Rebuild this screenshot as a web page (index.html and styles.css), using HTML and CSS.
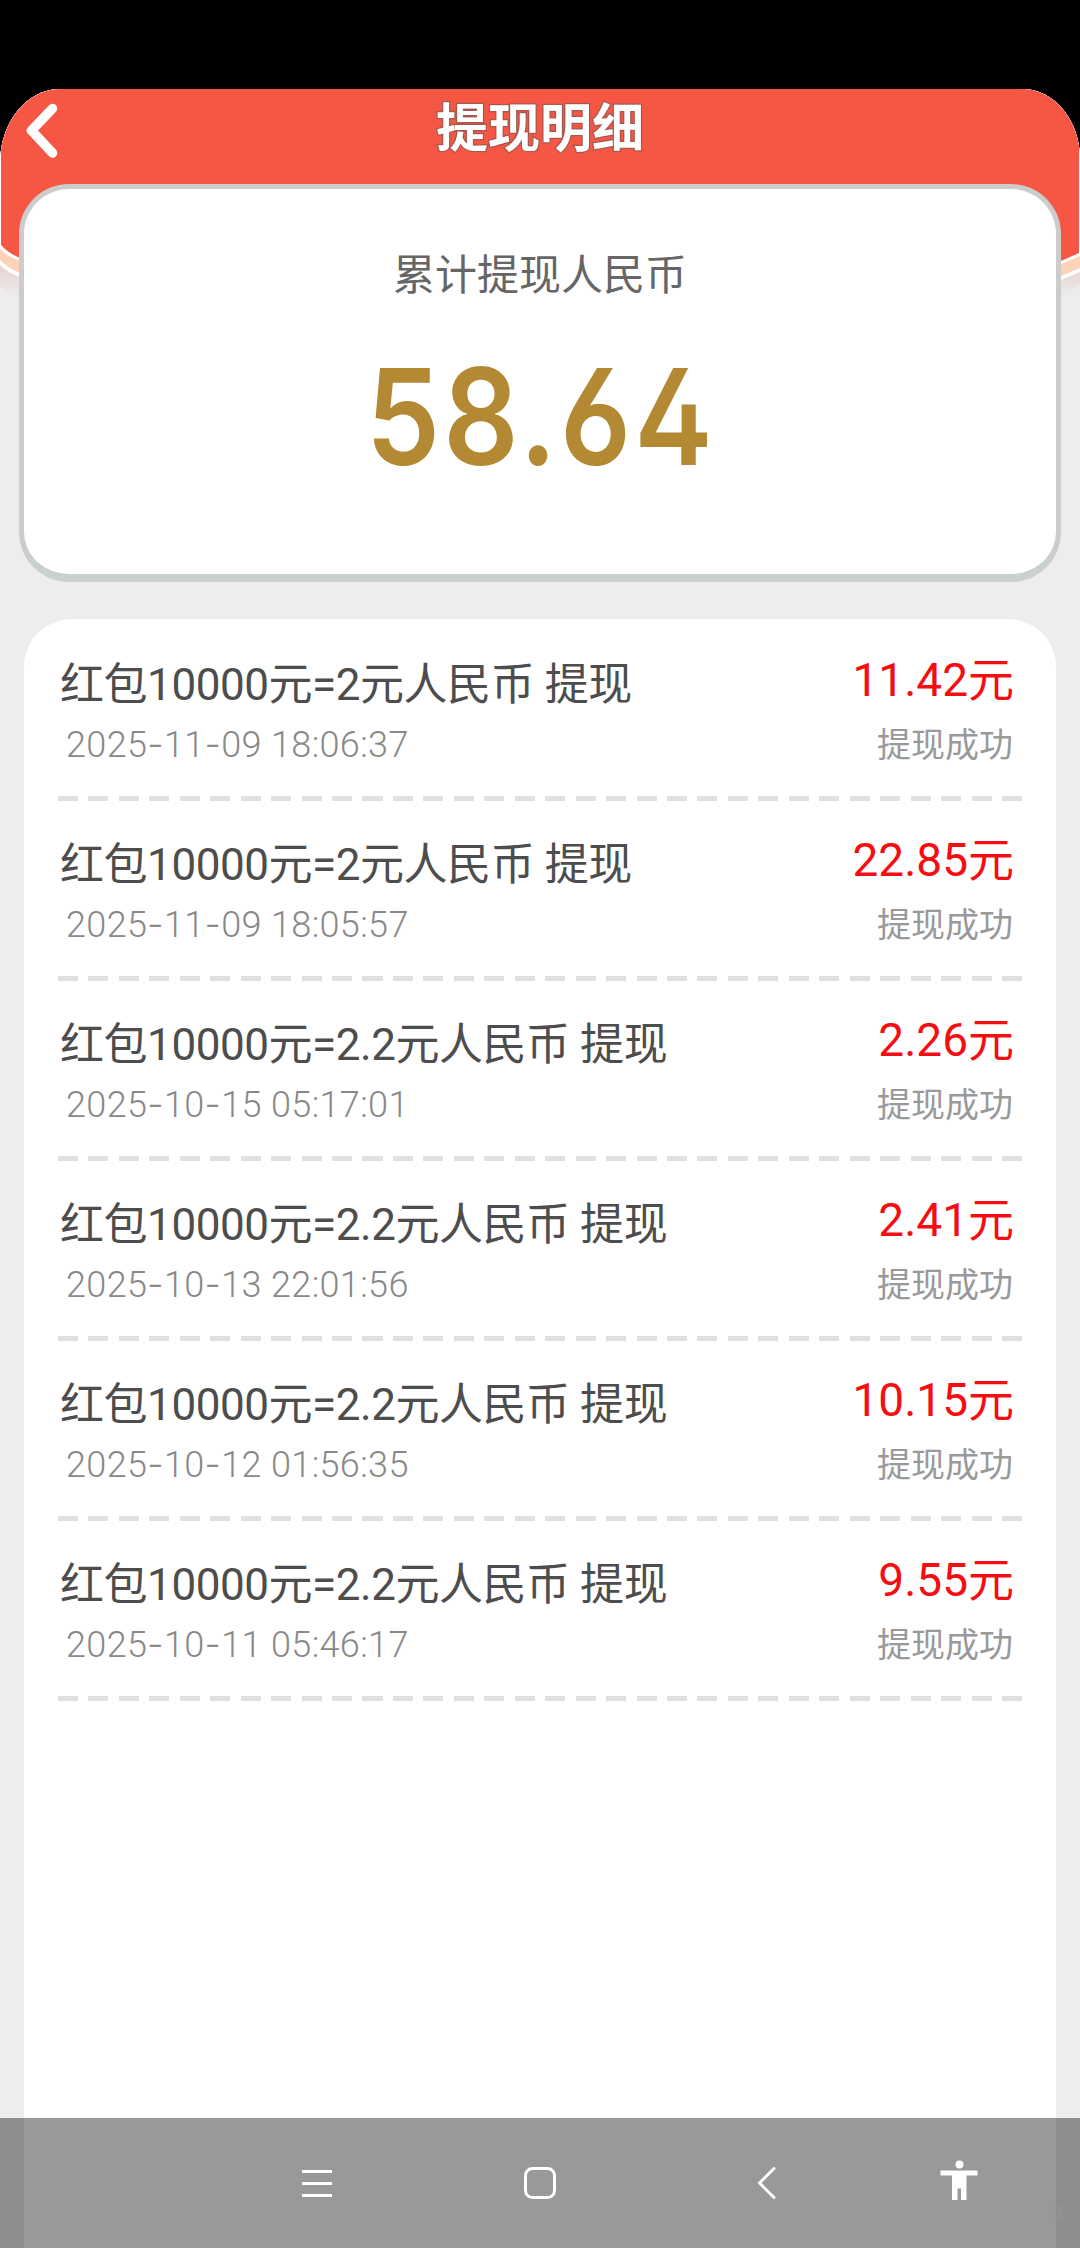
FILE: index.html
```html
<!DOCTYPE html>
<html lang="zh-CN">
<head>
<meta charset="utf-8">
<title>提现明细</title>
<link rel="stylesheet" href="styles.css">
</head>
<body>
<div class="screen">
  <div class="app">
    <svg class="backdrop" viewBox="0 0 1080 210" aria-hidden="true">
      <defs>
        <linearGradient id="fade" x1="0" y1="0" x2="0" y2="1">
          <stop offset="0.86" stop-color="#e8d5d3"/>
          <stop offset="1" stop-color="#ededed"/>
        </linearGradient>
      </defs>
      <path d="M0 0H1080V196L1061 209H20Q8 206 0 198Z" fill="url(#fade)"/>
      <path d="M0 0H1080V183L1061 191L1000 208H60L20 188Q8 184 0 176Z" fill="#fff"/>
      <path d="M0 0H1080V179L1061 187L1000 204H60L20 184Q8 179 0 171Z" fill="#fdd3b8"/>
      <path d="M0 0H1080V167L1061 175L1000 192H60L20 172Q8 168 0 160Z" fill="#fff"/>
      <path d="M1 0H1079V164L1061 172L1000 188H60L20 169Q8 164 1 156Z" fill="#f65744"/>
    </svg>
    <header class="bar">
      <svg class="back" viewBox="0 0 40 60" aria-label="返回"><path d="M29.500 8.500L8.500 30.500L29.500 53" fill="none" stroke="#fff" stroke-width="9.500" stroke-linecap="round" stroke-linejoin="round"/></svg>
      <h1 class="title">提现明细</h1>
    </header>
    <section class="total">
      <div class="total-label">累计提现人民币</div>
      <div class="total-value">58.64</div>
    </section>
    <ul class="records">
      <li class="record"><span class="name">红包10000元=2元人民币 提现</span><span class="amount">11.42元</span><time class="time">2025<i>-</i>11<i>-</i>09 18:06:37</time><span class="status">提现成功</span></li>
      <li class="record"><span class="name">红包10000元=2元人民币 提现</span><span class="amount">22.85元</span><time class="time">2025<i>-</i>11<i>-</i>09 18:05:57</time><span class="status">提现成功</span></li>
      <li class="record"><span class="name">红包10000元=2.2元人民币 提现</span><span class="amount">2.26元</span><time class="time">2025<i>-</i>10<i>-</i>15 05:17:01</time><span class="status">提现成功</span></li>
      <li class="record"><span class="name">红包10000元=2.2元人民币 提现</span><span class="amount">2.41元</span><time class="time">2025<i>-</i>10<i>-</i>13 22:01:56</time><span class="status">提现成功</span></li>
      <li class="record"><span class="name">红包10000元=2.2元人民币 提现</span><span class="amount">10.15元</span><time class="time">2025<i>-</i>10<i>-</i>12 01:56:35</time><span class="status">提现成功</span></li>
      <li class="record"><span class="name">红包10000元=2.2元人民币 提现</span><span class="amount">9.55元</span><time class="time">2025<i>-</i>10<i>-</i>11 05:46:17</time><span class="status">提现成功</span></li>
    </ul>
  </div>
  <nav class="navbar">
    <svg class="nav-icon" viewBox="0 0 40 44"><path d="M5 11.500H35M5 23.500H35M5 35.500H35" stroke="#fff" stroke-width="2.800"/></svg>
    <svg class="nav-icon" viewBox="0 0 40 44"><rect x="5.500" y="8.500" width="29" height="29" rx="7" fill="none" stroke="#fff" stroke-width="3"/></svg>
    <svg class="nav-icon" viewBox="0 0 40 44"><path d="M27 8.500L12.500 23L27 37.500" fill="none" stroke="#fff" stroke-width="3" stroke-linecap="round" stroke-linejoin="round"/></svg>
    <svg class="nav-icon" viewBox="0 0 40 44"><circle cx="20.500" cy="4.500" r="4" fill="#fff"/><path d="M1.500 10.500H38.500V15.500H27.500V40H22V28.500H18.500V40H13V15.500H1.500Z" fill="#fff"/></svg>
    <span class="version">3</span>
  </nav>
</div>
</body>
</html>
```
FILE: styles.css
```css
* { box-sizing: border-box; margin: 0; padding: 0; }
body { background: #000; font-family: Roboto, "Noto Sans CJK SC", sans-serif; }
.screen { position: relative; width: 1080px; height: 2248px; padding-top: 89px; overflow: hidden; }
.app {
  position: relative; display: flex; flex-direction: column; height: 2159px;
  background: #ededed; border-radius: 60px 58px 0 0 / 74px 70px 0 0; overflow: hidden;
}
.backdrop { position: absolute; top: 0; left: 0; width: 1080px; height: 210px; }
.bar { position: relative; display: grid; grid-template-columns: 80px 1fr 80px; height: 95px; }
.back { width: 40px; height: 60px; margin: 11px 0 0 23px; }
.title {
  text-align: center; color: #fff; font: 700 52px/72px "Noto Sans CJK SC", sans-serif;
  -webkit-text-stroke: 2.500px #a4584e; paint-order: stroke fill; stroke-linejoin: round;
}
.total {
  position: relative; flex: none; height: 398px; margin: 0 19px; padding-top: 56px; text-align: center;
  background: #fff; border: 5px solid #ccc; border-bottom: 8px solid #c9d1cd; border-radius: 50px;
}
.total-label { font-size: 42px; line-height: 62px; color: #666; }
.total-value {
  margin-top: 39px; font: 600 134px/140px Inter, sans-serif; color: #b38933;
  font-feature-settings: "ss01"; letter-spacing: 3.500px; text-indent: 2px; transform: scaleX(.88);
}
.records {
  flex: 1; margin: 37px 24px 0; padding: 2px 34px 0; list-style: none;
  background: #fff; border-radius: 48px 48px 0 0;
}
.record {
  display: grid; grid-template-columns: 1fr auto; grid-template-rows: 66px 60px; align-items: center;
  height: 180px; padding: 29px 8px 0 2px;
  background: repeating-linear-gradient(90deg, #e0e0e0 0 20px, transparent 20px 30.450px) left bottom / 964px 5px no-repeat;
}
.name { padding-top: 3px; font-size: 44px; line-height: 66px; letter-spacing: -.450px; color: #4d4d4d; white-space: pre; }
.amount { font-size: 46px; line-height: 60px; text-align: right; color: #f50d12; align-self: start; }
.time { padding: 0 0 4px 6px; font-size: 36px; line-height: 52px; letter-spacing: .350px; color: #888; font-weight: 300; }
.time i { font-family: Inter, sans-serif; font-style: normal; }
.status { padding: 0 1px 2px 0; font-size: 34px; line-height: 52px; text-align: right; color: #999; }
.navbar {
  position: absolute; left: 0; bottom: 0; width: 1080px; height: 130px; padding: 42px 0 0 297px;
  display: grid; grid-template-columns: 222.500px 227px 192.500px 40px; background: rgba(0, 0, 0, .4);
}
.nav-icon { width: 40px; height: 44px; }
.version { position: absolute; left: 1053px; bottom: 23px; font-size: 20px; line-height: 24px; color: #949494; }
```
